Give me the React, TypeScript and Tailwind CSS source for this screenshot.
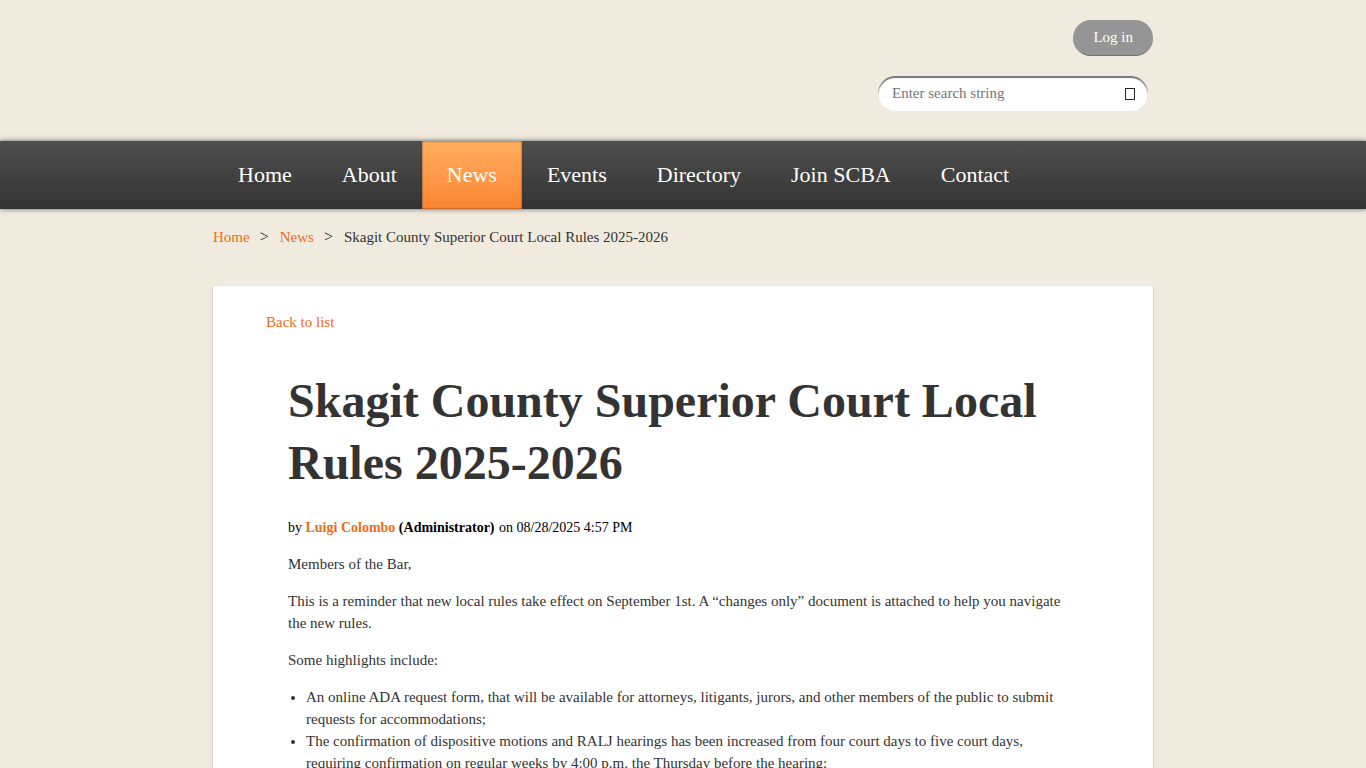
import clsx from 'clsx';

const navItems = [
  'Home',
  'About',
  'News',
  'Events',
  'Directory',
  'Join SCBA',
  'Contact',
];

const highlights = [
  'An online ADA request form, that will be available for attorneys, litigants, jurors, and other members of the public to submit requests for accommodations;',
  'The confirmation of dispositive motions and RALJ hearings has been increased from four court days to five court days, requiring confirmation on regular weeks by 4:00 p.m. the Thursday before the hearing;',
];

function Header() {
  return (
    <header className="mx-auto flex w-full max-w-[940px] flex-col items-end gap-5 pt-5 pb-[30px]">
      <button
        type="button"
        className="h-9 rounded-full border-b border-[#707070] bg-[#959595] px-5 pb-[2px] text-white"
      >
        Log in
      </button>
      <form
        role="search"
        onSubmit={(e) => e.preventDefault()}
        className="mr-[5px] flex h-[35px] w-[270px] items-center rounded-full bg-white pr-3 pb-[2px] pl-[14px] shadow-[inset_0_2px_1px_#777]"
      >
        <input
          type="text"
          aria-label="Search"
          placeholder="Enter search string"
          className="min-w-0 flex-1 outline-none placeholder:text-[#757575]"
        />
        <button type="submit" aria-label="Search" className="pt-[2px]">
          <svg width="12" height="12" viewBox="0 0 12 12" fill="none">
            <rect x="1.5" y="0.5" width="9" height="11" stroke="#222" />
          </svg>
        </button>
      </form>
    </header>
  );
}

function Nav() {
  return (
    <nav className="bg-linear-to-b from-[#4f4f4f] to-[#333] shadow-[0_0_5px_rgba(0,0,0,0.6)]">
      <ul className="mx-auto flex w-full max-w-[940px]">
        {navItems.map((item) => (
          <li key={item}>
            <a
              href="#"
              className={clsx(
                'block px-[25px] text-[22px] leading-[68px] text-white',
                item === 'News' &&
                  'bg-linear-to-b from-[#ffae5e] to-[#fb8532] shadow-[inset_0_0_2px_rgba(0,0,0,0.7)]'
              )}
            >
              {item}
            </a>
          </li>
        ))}
      </ul>
    </nav>
  );
}

function Breadcrumbs() {
  return (
    <ol className="flex pt-[17px] pb-[38px]">
      <li>
        <a href="#" className="text-[#f26c15]">
          Home
        </a>
        <span className="pr-[11px] pl-[10px] text-base leading-[22px]">
          &gt;
        </span>
      </li>
      <li>
        <a href="#" className="text-[#f26c15]">
          News
        </a>
        <span className="pr-[11px] pl-[10px] text-base leading-[22px]">
          &gt;
        </span>
      </li>
      <li>Skagit County Superior Court Local Rules 2025-2026</li>
    </ol>
  );
}

export default function App() {
  return (
    <div className="min-h-screen bg-[#f0eadf] font-['Liberation_Serif',serif] text-[15px] leading-[22px] text-[#333]">
      <Header />
      <Nav />
      <main className="mx-auto w-full max-w-[940px]">
        <Breadcrumbs />
        <div className="bg-white px-[53px] pt-[25px] pb-10 shadow-[0_1px_2px_rgba(0,0,0,0.3)]">
          <a href="#" className="text-[#f26c15]">
            Back to list
          </a>
          <article className="px-[22px] pt-[37px]">
            <h1 className="text-5xl leading-[62px] font-bold">
              Skagit County Superior Court Local Rules 2025-2026
            </h1>
            <p className="pt-[23px] text-sm leading-[22px] text-black">
              by{' '}
              <strong className="pr-px">
                <a href="#" className="text-[#f26c15]">
                  Luigi Colombo
                </a>{' '}
                (Administrator)
              </strong>{' '}
              on 08/28/2025 4:57 PM
            </p>
            <div className="flex flex-col gap-[15px] pt-[14px]">
              <p>Members of the Bar,</p>
              <p>
                This is a reminder that new local rules take effect on September
                1st. A “changes only” document is attached to help you navigate
                the new rules.
              </p>
              <p>Some highlights include:</p>
              <ul className="list-disc pl-[18px]">
                {highlights.map((text) => (
                  <li key={text}>{text}</li>
                ))}
              </ul>
            </div>
          </article>
        </div>
      </main>
    </div>
  );
}
